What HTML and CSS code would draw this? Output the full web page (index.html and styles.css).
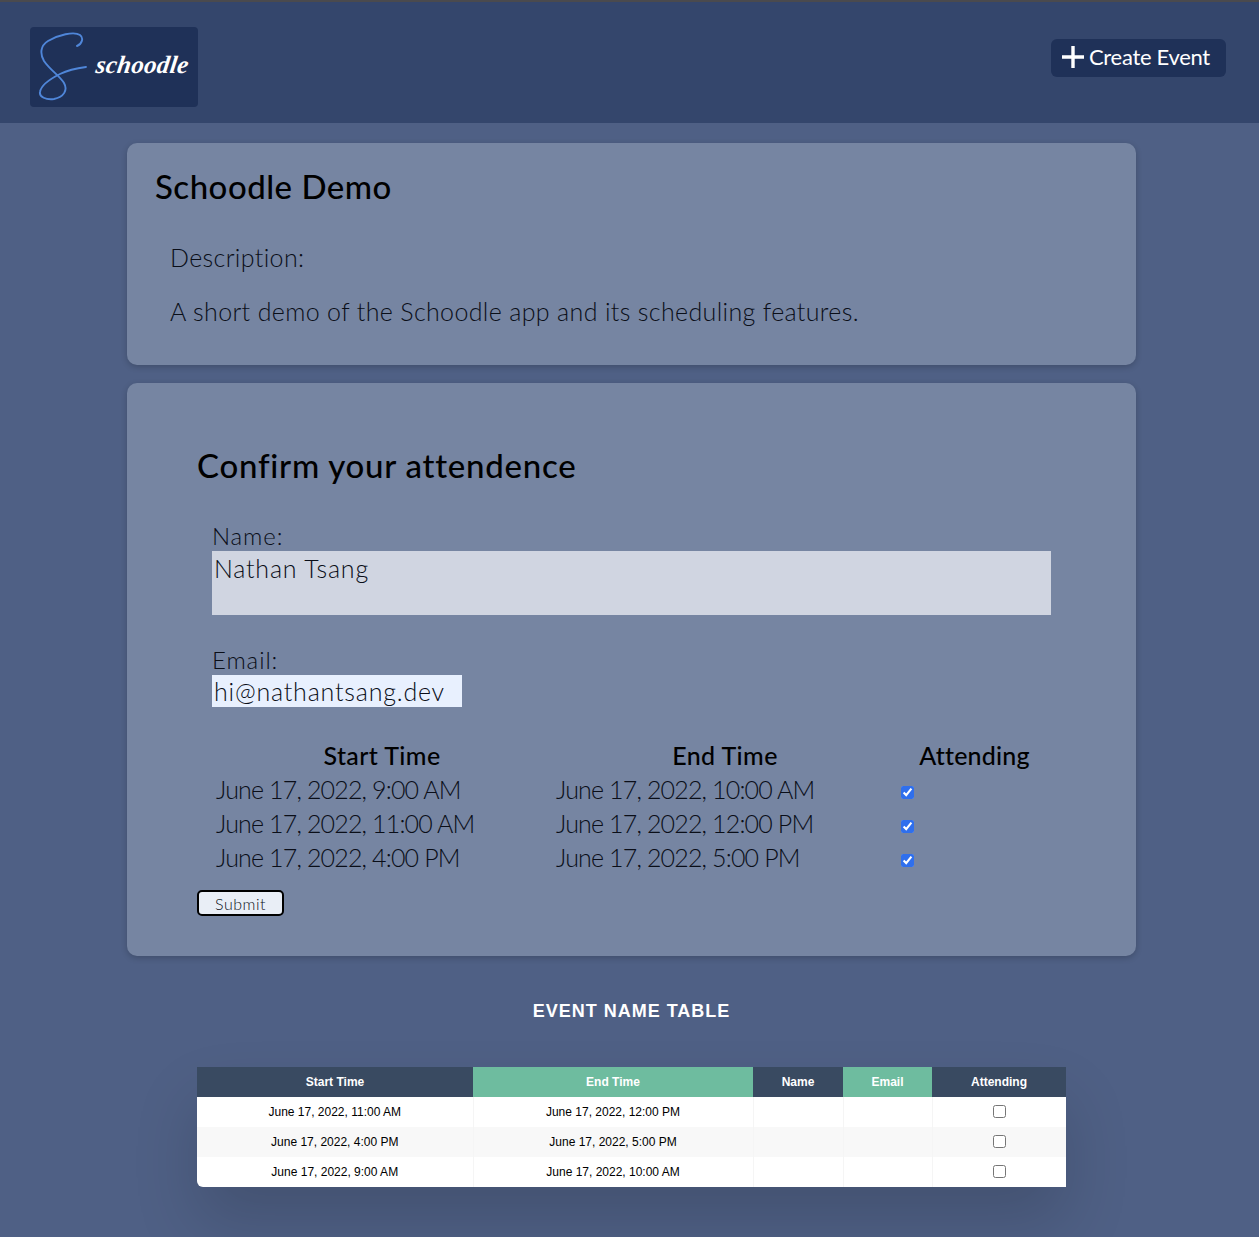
FILE: index.html
```html
<!DOCTYPE html>
<html lang="en">
<head>
    <meta charset="UTF-8">
    <title>Schoodle Demo</title>
    <link rel="stylesheet" href="styles.css">
</head>
<body>
    <header class="navbar">
        <a class="logo" href="#">
            <svg class="logo-mark" width="50" height="70" viewBox="0 0 50 70" fill="none">
                <path d="M39 14 C44 12 46 6 42 3 C36 -1 20 3 10 9 C2 14 2 22 6 29 C12 38 22 44 26 51 C30 58 26 65 16 67 C8 68 1 65 2 60 C3 53 14 46 22 42 C30 38 40 36 48 35" stroke="#4f86d9" stroke-width="1.9" stroke-linecap="round"/>
            </svg>
            <span class="logo-text">schoodle</span>
        </a>
        <a class="create-btn" href="#">
            <svg class="plus" width="22" height="22" viewBox="0 0 22 22"><path d="M11 0V22M0 11H22" stroke="#fff" stroke-width="3.4"/></svg>
            <span class="create-label">Create Event</span>
        </a>
    </header>

    <main class="content">
        <section class="card info-card">
            <h1>Schoodle Demo</h1>
            <p>Description:</p>
            <p>A short demo of the Schoodle app and its scheduling features.</p>
        </section>

        <section class="card form-card">
            <h2>Confirm your attendence</h2>
            <form class="attend-form">
                <label for="name">Name:</label>
                <textarea id="name" class="name-input" spellcheck="false">Nathan Tsang</textarea>
                <label for="email">Email:</label>
                <input id="email" class="email-input" type="text" value="hi@nathantsang.dev">
                <table class="slots">
                    <thead>
                        <tr><th class="slot-start">Start Time</th><th class="slot-end">End Time</th><th class="slot-attend">Attending</th></tr>
                    </thead>
                    <tbody>
                        <tr><td>June 17, 2022, 9:00 AM</td><td>June 17, 2022, 10:00 AM</td><td class="slot-check"><input type="checkbox" checked></td></tr>
                        <tr><td>June 17, 2022, 11:00 AM</td><td>June 17, 2022, 12:00 PM</td><td class="slot-check"><input type="checkbox" checked></td></tr>
                        <tr><td>June 17, 2022, 4:00 PM</td><td>June 17, 2022, 5:00 PM</td><td class="slot-check"><input type="checkbox" checked></td></tr>
                    </tbody>
                </table>
                <button type="button" class="submit-btn">Submit</button>
            </form>
        </section>

        <h3 class="table-title">EVENT NAME TABLE</h3>

        <table class="results">
            <thead>
                <tr>
                    <th class="col-start">Start Time</th>
                    <th class="col-end green">End Time</th>
                    <th class="col-name">Name</th>
                    <th class="col-email green">Email</th>
                    <th>Attending</th>
                </tr>
            </thead>
            <tbody>
                <tr><td>June 17, 2022, 11:00 AM</td><td>June 17, 2022, 12:00 PM</td><td></td><td></td><td><input type="checkbox"></td></tr>
                <tr><td>June 17, 2022, 4:00 PM</td><td>June 17, 2022, 5:00 PM</td><td></td><td></td><td><input type="checkbox"></td></tr>
                <tr><td>June 17, 2022, 9:00 AM</td><td>June 17, 2022, 10:00 AM</td><td></td><td></td><td><input type="checkbox"></td></tr>
            </tbody>
        </table>
    </main>
</body>
</html>
```

FILE: styles.css
```css
html, body {
    margin: 0;
    padding: 0;
}
body {
    height: 1237px;
    overflow: hidden;
    background-color: #4f6085;
    font-family: 'Lato', 'Noto Sans', Arial, sans-serif;
    font-weight: 300;
    color: #0a0e18;
    border-top: 2px solid #4a4a4e;
    box-sizing: border-box;
}
.navbar {
    height: 121px;
    background-color: #34466c;
    display: flex;
    justify-content: space-between;
    align-items: flex-start;
    padding: 25px 33px 0 30px;
    box-sizing: border-box;
}
.logo {
    width: 168px;
    height: 80px;
    background-color: #1f3158;
    border-radius: 4px;
    display: flex;
    align-items: center;
    text-decoration: none;
    padding: 0 0 0 8px;
    box-sizing: border-box;
}
.logo-mark {
    flex: none;
}
.logo-text {
    font-family: 'Liberation Serif', serif;
    font-style: italic;
    font-weight: 700;
    font-size: 25px;
    color: #fff;
    margin: -4px 0 0 8px;
    letter-spacing: 0.3px;
    transform: skewX(-8deg);
}
.create-btn {
    margin-top: 12px;
    width: 175px;
    height: 38px;
    background-color: #1f3158;
    border-radius: 6px;
    color: #fff;
    display: flex;
    align-items: center;
    gap: 5px;
    padding-left: 11px;
    box-sizing: border-box;
    text-decoration: none;
    font-size: 22px;
    font-weight: 400;
    letter-spacing: -0.3px;
}
.plus {
    margin-bottom: 2px;
}
.create-label {
    padding-bottom: 3px;
}
.content {
    width: 1009px;
    margin: 20px 0 0 127px;
}
.card {
    background-color: #7685a2;
    border-radius: 10px;
    box-shadow: 0 2px 6px rgba(0, 0, 0, 0.2);
}
.info-card {
    height: 222px;
    padding: 23px 28px 0;
    box-sizing: border-box;
    margin-bottom: 18px;
}
h1 {
    margin: 0 0 36px;
    font-size: 33px;
    line-height: 40px;
    font-weight: 500;
    letter-spacing: 0.5px;
    color: #000;
}
.info-card p {
    margin: 0 0 24px 15px;
    font-size: 25px;
    line-height: 30px;
    letter-spacing: 0.35px;
}
.form-card {
    height: 573px;
    padding: 62px 70px 0;
    box-sizing: border-box;
}
h2 {
    margin: 0 0 36px;
    font-size: 33px;
    line-height: 40px;
    font-weight: 500;
    letter-spacing: 0.75px;
    color: #000;
}
.attend-form label {
    display: block;
    margin-left: 15px;
    font-size: 24px;
    line-height: 30px;
    letter-spacing: 0.9px;
}
.name-input, .email-input {
    display: block;
    margin: 0 0 30px 15px;
    border: none;
    border-radius: 0;
    outline: none;
    padding: 2px;
    box-sizing: border-box;
    font-family: inherit;
    font-weight: 300;
    font-size: 25px;
    line-height: 30px;
    letter-spacing: 0.8px;
    color: #0a0e18;
    resize: none;
}
.name-input {
    width: 839px;
    height: 64px;
    background-color: #d0d5e1;
    overflow: hidden;
}
.email-input {
    width: 250px;
    height: 32px;
    background-color: #e8f0fe;
}
.slots {
    margin: 33px 0 16px 15px;
    width: 839px;
    table-layout: fixed;
    border-collapse: collapse;
    font-size: 25px;
    letter-spacing: -0.85px;
}
.slots th {
    font-size: 25px;
    font-weight: 500;
    letter-spacing: 0.4px;
    color: #000;
    height: 30px;
    padding: 0 0 2px;
}
.slots .slot-attend {
    letter-spacing: 0.2px;
}
.slot-start {
    width: 340px;
}
.slot-end {
    width: 346px;
}
.slots td {
    height: 34px;
    padding: 0 0 0 4px;
}
.slots .slot-check {
    padding-left: 3px;
}
.slots input {
    width: 13px;
    height: 13px;
    margin: 0 0 1px;
    accent-color: #2f6fed;
    vertical-align: middle;
}
.submit-btn {
    display: block;
    width: 87px;
    height: 26px;
    padding: 0;
    background-color: #e9eef6;
    border: 2px solid #000;
    border-radius: 5px;
    font-family: inherit;
    font-weight: 300;
    font-size: 16px;
    letter-spacing: 0.5px;
    color: #0a0e18;
}
.table-title {
    margin: 44px 0 45px;
    text-align: center;
    font-family: 'Liberation Sans', Arial, sans-serif;
    font-size: 18px;
    line-height: 22px;
    font-weight: 700;
    letter-spacing: 1px;
    color: #fff;
}
.results {
    width: 869px;
    margin-left: 70px;
    table-layout: fixed;
    border-collapse: collapse;
    background-color: #fff;
    border-radius: 0 0 0 6px;
    overflow: hidden;
    box-shadow: 0 35px 65px rgba(0, 0, 0, 0.15);
    font-family: 'Liberation Sans', Arial, sans-serif;
    font-size: 12px;
    font-weight: 400;
    color: #000;
    text-align: center;
}
.results th {
    height: 30px;
    padding: 0;
    background-color: #394a61;
    color: #fff;
    font-weight: 700;
}
.results th.green {
    background-color: #6ebc9f;
}
.col-start {
    width: 276px;
}
.col-end {
    width: 280px;
}
.col-name {
    width: 90px;
}
.col-email {
    width: 89px;
}
.results td {
    height: 30px;
    padding: 0;
    border-right: 1px solid #f5f5f5;
}
.results td:last-child {
    border-right: none;
}
.results tbody tr:nth-child(even) {
    background-color: #f8f8f8;
}
.results input {
    width: 13px;
    height: 13px;
    margin: 0 0 2px;
    vertical-align: middle;
}
```
